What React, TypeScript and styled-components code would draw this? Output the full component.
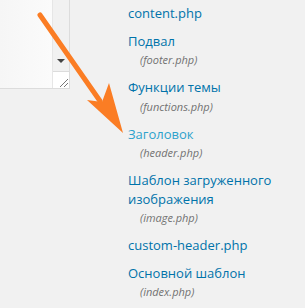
import React from "react";
import styled, { createGlobalStyle } from "styled-components";

const GlobalStyle = createGlobalStyle`
  html, body {
    margin: 0;
    padding: 0;
    background: #f1f1f1;
  }
  body {
    font-family: 'Open Sans', 'Noto Sans', sans-serif;
    overflow: hidden;
  }
`;

const Page = styled.div`
  position: relative;
  width: 305px;
  height: 308px;
  display: flex;
  align-items: flex-start;
  background: #f1f1f1;
  overflow: hidden;
`;

const Editor = styled.div`
  display: flex;
  width: 70px;
  height: 89px;
  border-right: 1px solid #dcdcdc;
  border-bottom: 1px solid #dcdcdc;
  box-sizing: border-box;
  flex-shrink: 0;
`;

const EditorText = styled.div`
  flex: 1;
  background: linear-gradient(to right, #f6f6f6, #fbfbfb);
`;

const Scrollbar = styled.div`
  width: 16px;
  display: flex;
  flex-direction: column;
  background: #f1f1f1;
  border-left: 1px solid #e6e6e6;
`;

const Track = styled.div`
  flex: 1;
  display: flex;
  align-items: flex-end;
  justify-content: center;
  padding-bottom: 8px;
`;

const DownArrow = styled.div`
  width: 0;
  height: 0;
  border-left: 4px solid transparent;
  border-right: 4px solid transparent;
  border-top: 4px solid #444;
`;

const Resizer = styled.div`
  height: 16px;
  background: #fff;
  border-top: 1px solid #dcdcdc;
  display: flex;
  align-items: flex-end;
  justify-content: flex-end;
`;

const Sidebar = styled.ul`
  list-style: none;
  margin: 0;
  padding: 4px 0 0 58px;
  display: flex;
  flex-direction: column;
  gap: 9px;
`;

const Item = styled.li`
  display: flex;
  flex-direction: column;
`;

const Title = styled.a<{ $current?: boolean }>`
  font-size: 13px;
  line-height: 18.5px;
  color: ${(p) => (p.$current ? "#2ea2cc" : "#0073aa")};
  text-decoration: none;
`;

const FileName = styled.span`
  font-size: 11px;
  line-height: 19px;
  font-style: italic;
  color: #727272;
  padding-left: 12px;
`;

const Overlay = styled.svg`
  position: absolute;
  left: 0;
  top: 0;
  pointer-events: none;
`;

const files = [
  { title: "content.php" },
  { title: "Подвал", file: "footer.php" },
  { title: "Функции темы", file: "functions.php" },
  { title: "Заголовок", file: "header.php", current: true },
  { title: "Шаблон загруженного изображения", file: "image.php" },
  { title: "custom-header.php" },
  { title: "Основной шаблон", file: "index.php" },
];

const App: React.FC = () => {
  return (
    <Page>
      <GlobalStyle />
      <Editor>
        <EditorText />
        <Scrollbar>
          <Track>
            <DownArrow />
          </Track>
          <Resizer>
            <svg width="12" height="12" viewBox="0 0 12 12">
              <path d="M3 11 L11 3 M7 11 L11 7" stroke="#777" strokeWidth="1" />
            </svg>
          </Resizer>
        </Scrollbar>
      </Editor>

      <Sidebar>
        {files.map((f) => (
          <Item key={f.title}>
            <Title href="#" $current={f.current}>
              {f.title === "Шаблон загруженного изображения" ? (
                <>
                  Шаблон загруженного
                  <br />
                  изображения
                </>
              ) : (
                f.title
              )}
            </Title>
            {f.file && <FileName>({f.file})</FileName>}
          </Item>
        ))}
      </Sidebar>

      {/* arrow drawn over the page */}
      <Overlay width="305" height="308" viewBox="0 0 305 308">
        <line x1="40" y1="15" x2="100" y2="101" stroke="#fb7d24" strokeWidth="5" strokeLinecap="round" />
        <path d="M123 133 L109 83 L102 102 L87 100 Z" fill="#fb7d24" />
      </Overlay>
    </Page>
  );
};

export default App;
